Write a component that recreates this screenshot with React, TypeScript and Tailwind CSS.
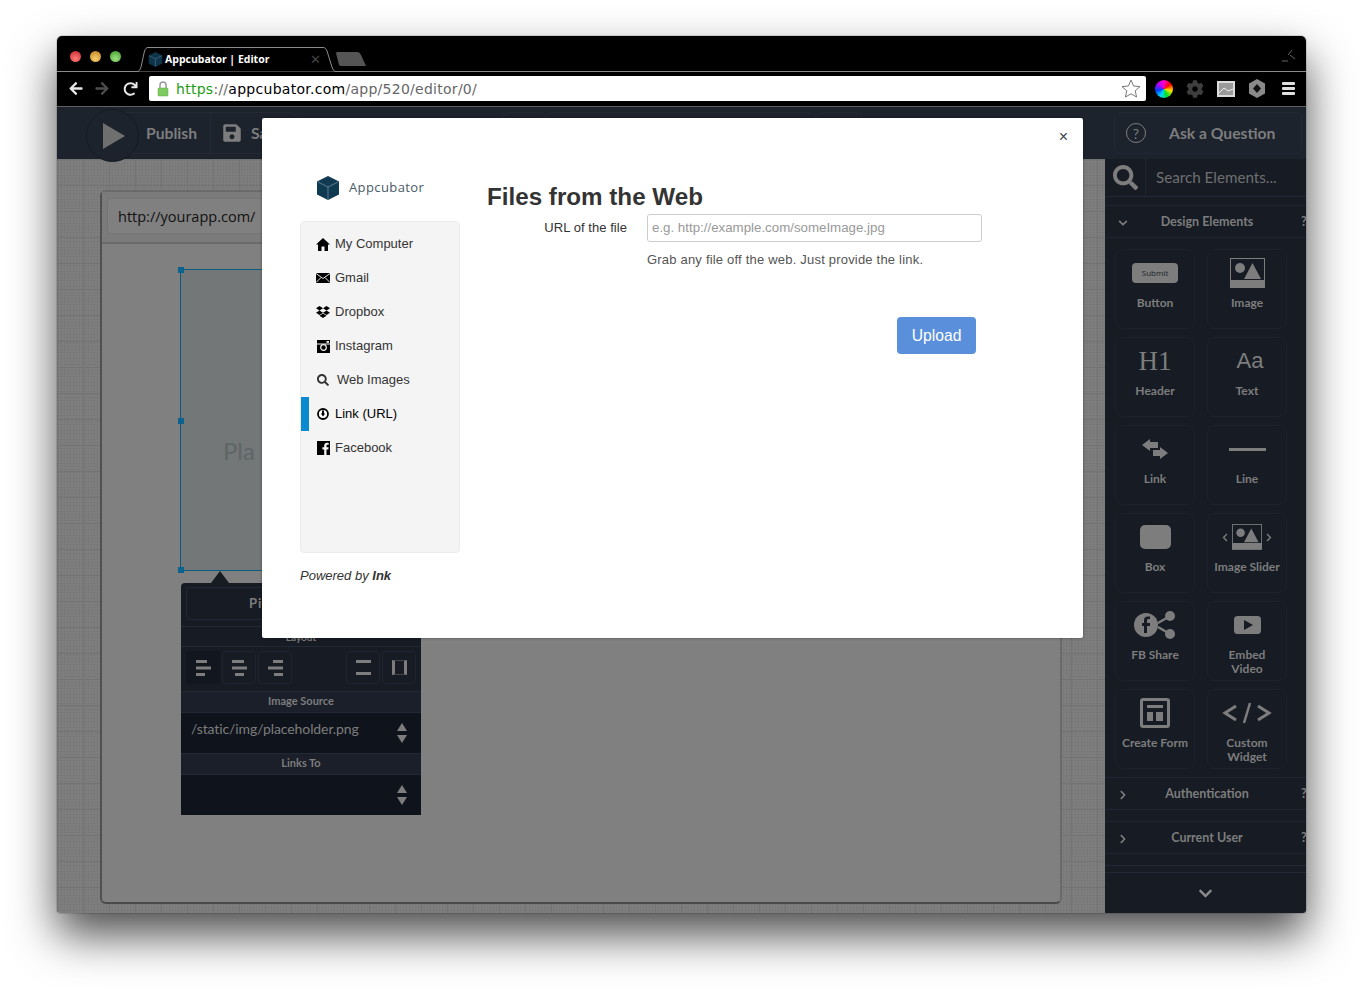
import { FC, ReactNode } from 'react';
import {
  FaArrowLeft,
  FaArrowRight,
  FaRedo,
  FaCog,
  FaDropbox,
  FaSearch,
  FaSave,
  FaChevronDown,
  FaChevronRight,
} from 'react-icons/fa';

const GREY = '#7d7d7d';

const Cube: FC<{ size: number }> = ({ size }) => (
  <svg width={size} height={size} viewBox="0 0 24 24">
    <path d="M12 0 23 5.5V18.5L12 24 1 18.5V5.5Z" fill="#0f3a52" />
    <path d="M2 6 12 11 22 6M12 11V23" stroke="#6d8ea1" strokeWidth="0.8" fill="none" />
  </svg>
);

const ImageGlyph: FC<{ w: number; h: number }> = ({ w, h }) => (
  <svg width={w} height={h} viewBox="0 0 35 30">
    <rect width="35" height="30" fill={GREY} />
    <rect x="1" y="1" width="33" height="21" fill="#161b24" />
    <circle cx="10" cy="10" r="5" fill={GREY} />
    <path d="M14 21 22.500 5 31 21Z" fill={GREY} />
  </svg>
);

const alignBars = {
  left: [[0, 11], [0, 15], [0, 9]],
  center: [[0, 12], [0, 15], [3, 9]],
  right: [[5, 10], [0, 15], [6, 9]],
};

const AlignIcon: FC<{ kind: 'left' | 'center' | 'right' }> = ({ kind }) => (
  <svg width="15" height="16" viewBox="0 0 15 16">
    {alignBars[kind].map(([x, w], i) => (
      <rect key={i} x={x} y={i * 6.5} width={w} height="3" fill={GREY} />
    ))}
  </svg>
);

const UpDown = () => (
  <svg width="10" height="20" viewBox="0 0 10 20">
    <path d="M5 0 10 8H0ZM0 12H10L5 20Z" fill={GREY} />
  </svg>
);

interface TileProps {
  label: ReactNode;
  icon: ReactNode;
}

const Tile: FC<TileProps> = ({ label, icon }) => (
  <div className="flex h-[80px] w-[80px] flex-col items-center rounded-[8px] border border-[#1c222c]">
    <div className="flex h-[46px] w-full items-center justify-center">{icon}</div>
    <div className="text-center text-[12px] leading-[14px] font-bold whitespace-nowrap text-[#7d7d7d]">{label}</div>
  </div>
);

const tiles: TileProps[] = [
  {
    label: 'Button',
    icon: (
      <div className="flex h-[20px] w-[46px] items-center justify-center rounded-[4px] bg-[#7d7d7d] text-[8px] text-[#20242c] [font-family:'Open_Sans',sans-serif]">
        Submit
      </div>
    ),
  },
  { label: 'Image', icon: <ImageGlyph w={35} h={30} /> },
  {
    label: 'Header',
    icon: <span className="text-[27px] leading-none text-[#7d7d7d] [font-family:'Liberation_Serif',serif]">H1</span>,
  },
  {
    label: 'Text',
    icon: <span className="pl-[6px] text-[22px] leading-none text-[#7d7d7d] [font-family:'Liberation_Sans',sans-serif]">Aa</span>,
  },
  {
    label: 'Link',
    icon: (
      <svg width="26" height="20" viewBox="0 0 26 20">
        <path d="M0 6 8 0V3H16V9H8V12ZM26 14 18 8V11H11V17H18V20Z" fill={GREY} />
      </svg>
    ),
  },
  { label: 'Line', icon: <div className="h-[3px] w-[37px] bg-[#7d7d7d]" /> },
  { label: 'Box', icon: <div className="h-[24px] w-[31px] rounded-[5px] bg-[#7d7d7d]" /> },
  {
    label: 'Image Slider',
    icon: (
      <div className="flex items-center gap-[4px] text-[#7d7d7d]">
        <FaChevronRight className="h-[9px] w-[6px] rotate-180" />
        <ImageGlyph w={30} h={26} />
        <FaChevronRight className="h-[9px] w-[6px]" />
      </div>
    ),
  },
  {
    label: 'FB Share',
    icon: (
      <svg width="42" height="28" viewBox="0 0 42 28">
        <path d="M24 12 36 5M24 16 36 23" stroke={GREY} strokeWidth="2.500" />
        <circle cx="12" cy="14" r="12" fill={GREY} />
        <circle cx="36" cy="5" r="5" fill={GREY} />
        <circle cx="36" cy="23" r="5" fill={GREY} />
        <path d="M13 22V15H16V12H13V9.500C13 8.500 13.600 8 15 8H16V5.500H14C11 5.500 10 7 10 9.500V12H8V15H10V22Z" fill="#161b24" />
      </svg>
    ),
  },
  {
    label: (
      <>
        Embed
        <br />
        Video
      </>
    ),
    icon: (
      <svg width="27" height="18" viewBox="0 0 27 18">
        <rect width="27" height="18" rx="3.500" fill={GREY} />
        <path d="M10 4 19 9 10 14Z" fill="#161b24" />
      </svg>
    ),
  },
  {
    label: 'Create Form',
    icon: (
      <svg width="30" height="30" viewBox="0 0 30 30">
        <rect x="1.500" y="1.500" width="27" height="27" rx="1.500" fill="none" stroke={GREY} strokeWidth="3" />
        <rect x="7" y="7" width="16" height="3" fill={GREY} />
        <rect x="7" y="14" width="6" height="9" fill={GREY} />
        <rect x="16" y="14" width="7" height="9" fill={GREY} />
      </svg>
    ),
  },
  {
    label: (
      <>
        Custom
        <br />
        Widget
      </>
    ),
    icon: (
      <svg width="50" height="22" viewBox="0 0 50 22">
        <path d="M14 4 3 11 14 18M36 4 47 11 36 18" stroke={GREY} strokeWidth="3" fill="none" />
        <path d="M28 1 22 21" stroke={GREY} strokeWidth="2.500" />
      </svg>
    ),
  },
];

const menu = [
  {
    label: 'My Computer',
    icon: (
      <svg width="14" height="13" viewBox="0 0 14 13">
        <path d="M7 0 14 6.500H12V13H8.500V8.500H5.500V13H2V6.500H0Z" fill="#000" />
      </svg>
    ),
  },
  {
    label: 'Gmail',
    icon: (
      <svg width="14" height="10" viewBox="0 0 14 10">
        <rect width="14" height="10" fill="#000" />
        <path d="M0 .5 7 5.500 14 .5M0 9.500 5 4.500M14 9.500 9 4.500" stroke="#fff" strokeWidth="0.9" fill="none" />
      </svg>
    ),
  },
  { label: 'Dropbox', icon: <FaDropbox className="h-[14px] w-[14px]" /> },
  {
    label: 'Instagram',
    icon: (
      <svg width="13" height="13" viewBox="0 0 13 13">
        <rect width="13" height="13" fill="#000" />
        <rect y="3.500" width="13" height="1" fill="#f4f4f4" />
        <circle cx="6.500" cy="7.500" r="2.800" fill="#000" stroke="#f4f4f4" strokeWidth="1.200" />
        <rect x="9.500" y="1" width="2.500" height="1.800" fill="#f4f4f4" />
      </svg>
    ),
  },
  { label: 'Web Images', icon: <FaSearch className="h-[12px] w-[12px] text-[#333]" />, extra: true },
  {
    label: 'Link (URL)',
    active: true,
    icon: (
      <svg width="12" height="12" viewBox="0 0 12 12">
        <circle cx="6" cy="6" r="5" fill="#fff" stroke="#000" strokeWidth="1.800" />
        <path d="M5 2.500H7V6H5ZM3.800 5.500H8.200L6 8.500Z" fill="#000" />
      </svg>
    ),
  },
  {
    label: 'Facebook',
    icon: (
      <svg width="13" height="14" viewBox="0 0 13 14">
        <path d="M0 0H13V14H9.500V8.500H11.300L11.600 6.300H9.500V5C9.500 4.200 9.800 3.800 10.700 3.800H11.700V1.900C11.300 1.800 10.600 1.800 9.900 1.800 8.300 1.800 7.200 2.800 7.200 4.700V6.300H5.400V8.500H7.200V14H0Z" fill="#000" />
      </svg>
    ),
  },
];

const SectionHeader: FC<{ title: string; open?: boolean; className: string }> = ({ title, open, className }) => (
  <div className={`relative flex shrink-0 items-center justify-center border-y border-[#1f2530] pt-[2px] pl-[3px] text-[12.500px] font-bold text-[#7d7d7d] ${className}`}>
    <span className="absolute left-[13px] text-[#7d7d7d]">
      {open ? <FaChevronDown className="h-[10px] w-[10px]" /> : <FaChevronRight className="h-[10px] w-[10px]" />}
    </span>
    {title}
    <span className="absolute left-[196px]">?</span>
  </div>
);

const PopLabel: FC<{ text: string }> = ({ text }) => (
  <div className="flex h-[22px] items-center justify-center border-y border-[#232934] bg-[#1a1f29] pb-[2px] text-[11px] font-bold text-[#7d7d7d]">{text}</div>
);

export default function App() {
  return (
    <div className="h-[992px] w-[1363px] overflow-hidden bg-white pt-[36px] pl-[57px] [font-family:'Lato',sans-serif]">
      <div className="flex h-[877px] w-[1249px] flex-col overflow-hidden rounded-t-[5px] rounded-b-[3px] shadow-[0_22px_45px_rgba(0,0,0,0.7),0_0_0_1px_rgba(0,0,0,0.12)]">
        {/* Title bar */}
        <div className="relative flex h-[36px] shrink-0 border-b border-[#8c8c8c] bg-black">
          <div className="flex items-center gap-[9px] pt-[5px] pl-[13px]">
            <div className="h-[11px] w-[11px] rounded-full bg-[radial-gradient(circle_at_50%_70%,#ff7a78,#c7242a)]" />
            <div className="h-[11px] w-[11px] rounded-full bg-[radial-gradient(circle_at_50%_70%,#f8cf6c,#b87b19)]" />
            <div className="h-[11px] w-[11px] rounded-full bg-[radial-gradient(circle_at_50%_70%,#9be07c,#3d9a2c)]" />
          </div>
          <div className="relative mt-[11px] ml-[13px] flex h-[25px] w-[203px] items-center pr-[16px] pl-[14px]">
            <svg className="absolute inset-0" width="203" height="25" viewBox="0 0 203 25">
              <path d="M0 24.500H3C5 24.500 6 23 7 20L10.500 4C11.500 1.500 12.500 .5 14 .5H189C191 .5 192 1.500 193 4L198 20C199 23 200 24.500 202 24.500H203" fill="#000" stroke="#8c8c8c" />
            </svg>
            <span className="relative opacity-90"><Cube size={15} /></span>
            <span className="relative ml-[2px] flex-1 text-[10.500px] font-bold text-white [font-family:'Open_Sans',sans-serif]">Appcubator | Editor</span>
            <span className="relative text-[13px] leading-none text-[#444]">✕</span>
          </div>
          <svg className="mt-[16px] -ml-[1px]" width="30" height="14" viewBox="0 0 30 14">
            <path d="M0 1 1 0H21C23 0 24 1 25 3L30 14H5C3.500 14 3 13 2.500 11Z" fill="#555" />
          </svg>
          <svg className="absolute top-[11px] right-[10px]" width="14" height="15" viewBox="0 0 14 15">
            <path d="M0 14H6M8 8 13 12M6 8 10 3" stroke="#666" strokeWidth="1" fill="none" />
          </svg>
        </div>

        {/* Toolbar */}
        <div className="flex h-[35px] shrink-0 items-center border-b border-[#5f5f5f] bg-black pb-[1px]">
          <div className="flex w-[92px] items-center pl-[11px]">
            <FaArrowLeft className="h-[15px] w-[16px] text-[#e8e8e8]" />
            <FaArrowRight className="ml-[10px] h-[15px] w-[16px] text-[#4e4e4e]" />
            <FaRedo className="ml-[13px] h-[14px] w-[15px] text-[#e8e8e8]" />
          </div>
          <div className="flex h-[25px] w-[997px] items-center rounded-[2px] bg-white pr-[5px] pl-[8px] text-[14px] tracking-[0.27px] text-[#666] [font-family:'DejaVu_Sans',sans-serif]">
            <svg width="12" height="16" viewBox="0 0 12 16">
              <path d="M3 7V4C3 2.300 4.300 1 6 1S9 2.300 9 4V7" fill="none" stroke="#9a9a9a" strokeWidth="1.500" />
              <rect x="1" y="7" width="10" height="8" rx="1" fill="#7ecb62" stroke="#5aa843" strokeWidth="0.5" />
            </svg>
            <span className="ml-[7px] pt-[2px] text-[#1e9b13]">https</span>
            <span className="pt-[2px]">://</span>
            <span className="pt-[2px] text-black">appcubator.com</span>
            <span className="pt-[2px]">/app/520/editor/0/</span>
            <svg className="ml-auto" width="20" height="19" viewBox="0 0 20 19">
              <path d="M10 1 12.600 7 19 7.600 14.200 11.800 15.600 18 10 14.800 4.400 18 5.800 11.800 1 7.600 7.400 7Z" fill="#fff" stroke="#777" strokeWidth="1" />
            </svg>
          </div>
          <div className="ml-[9px] flex items-center gap-[13px]">
            <div className="h-[18px] w-[18px] rounded-full bg-[conic-gradient(#ff00c8,#ff0000,#ffe000,#00e020,#00d8ff,#0040ff,#b000ff,#ff00c8)]" />
            <FaCog className="h-[18px] w-[18px] text-[#3e3e3e]" />
            <svg width="18" height="16" viewBox="0 0 18 16">
              <rect width="18" height="16" fill="#dcdcdc" />
              <rect x="2" y="2" width="14" height="12" fill="#9a9a9a" />
              <path d="M2 12 7 7 11 10 16 8" stroke="#eee" fill="none" />
            </svg>
            <svg width="18" height="19" viewBox="0 0 18 19">
              <path d="M9 0 17 4.500V14.500L9 19 1 14.500V4.500Z" fill="#8a8a8a" />
              <path d="M9 5 13 9.500 9 14 5 9.500Z" fill="#111" />
            </svg>
            <div className="ml-[3px] flex w-[13px] flex-col gap-[2px]">
              <div className="h-[3px] rounded-[1px] bg-[#e0e0e0]" />
              <div className="h-[3px] rounded-[1px] bg-[#e0e0e0]" />
              <div className="h-[3px] rounded-[1px] bg-[#e0e0e0]" />
            </div>
          </div>
        </div>

        {/* App */}
        <div className="relative flex min-h-0 flex-1 flex-col">
          {/* App header */}
          <div className="flex h-[52px] shrink-0 items-start bg-[#1c232d] pt-[5px] pl-[55px]">
            <div className="relative flex h-[42px] w-[185px] items-center rounded-[6px] border border-[#232a35] text-[15.700px] font-bold text-[#7d7d7d]">
              <div className="absolute top-[-4px] left-[-27px] flex h-[53px] w-[53px] items-center justify-center rounded-full border border-[#151b23] bg-[#1c232d]">
                <svg width="24" height="26" viewBox="0 0 24 26" className="ml-[3px]">
                  <path d="M1 0 23 13 1 26Z" fill="#6f6f6f" />
                </svg>
              </div>
              <span className="ml-[33px] pt-[2px]">Publish</span>
              <div className="ml-[13px] h-full border-l border-[#232a35]" />
              <FaSave className="ml-[11px] h-[20px] w-[20px]" />
              <span className="ml-[9px] pt-[2px]">Save</span>
            </div>
            <div className="ml-[206px] h-[42px] w-[43px] rounded-[6px] border border-[#232a35]" />
            <div className="h-[42px] w-[270px] rounded-[6px] border border-[#232a35]" />
            <div className="h-[42px] w-[46px] rounded-[6px] border border-[#232a35]" />
            <div className="mr-[4px] ml-auto flex h-[42px] w-[188px] items-center rounded-[6px] border border-[#232a35] text-[15.700px] font-bold text-[#7d7d7d]">
              <span className="ml-[11px] flex h-[20px] w-[20px] items-center justify-center rounded-full border border-[#7d7d7d] text-[14px] font-normal">?</span>
              <span className="ml-[23px] pt-[2px]">Ask a Question</span>
            </div>
          </div>

          <div className="flex min-h-0 flex-1">
            {/* Canvas */}
            <div className="w-[1048px] shrink-0 bg-[#7d7d7d] bg-[image:radial-gradient(#727272_0.6px,transparent_0.8px),linear-gradient(#737373_1px,transparent_1px),linear-gradient(90deg,#737373_1px,transparent_1px)] bg-[size:3px_3px,26px_26px,26px_26px] px-[43px] pt-[31px] pb-[9px]">
              <div className="h-full rounded-[6px] border-2 border-[#6a6a6a] border-b-[#4a4a4a] border-l-[#505050] bg-[#808080]">
                <div className="h-[52px] border-b-2 border-[#6a6a6a] bg-[#7b7b7b] pt-[6px] pl-[5px]">
                  <div className="flex h-[36px] w-[320px] items-center rounded-[4px] border border-[#747474] bg-[#808080] pt-[2px] pl-[10px] text-[14.500px] text-[#111] [font-family:'Open_Sans',sans-serif]">
                    http://yourapp.com/
                  </div>
                </div>
                {/* Selected image */}
                <div className="relative mt-[25px] ml-[78px] h-[302px] w-[480px] border border-[#0b5a82] bg-[#737778]">
                  <div className="absolute top-[166px] left-[42px] text-[24px] leading-[30px] whitespace-nowrap text-[#5f6566]">Pla</div>
                  <div className="absolute top-[-3px] left-[-3px] h-[6px] w-[6px] bg-[#0b628c]" />
                  <div className="absolute top-[148px] left-[-3px] h-[6px] w-[6px] bg-[#0b628c]" />
                  <div className="absolute bottom-[-3px] left-[-3px] h-[6px] w-[6px] bg-[#0b628c]" />
                  {/* Settings popover */}
                  <div className="absolute top-[313px] left-0 w-[240px] rounded-t-[4px] bg-[#161b24]">
                    <div className="absolute top-[-12px] left-[30px] h-0 w-0 border-x-[9px] border-b-[12px] border-x-transparent border-b-[#161b24]" />
                    <div className="flex h-[44px] items-start border-b border-[#232934] px-[5px] pt-[4px]">
                      <div className="flex h-[33px] w-full items-center justify-center rounded-[4px] border border-[#232934] text-[13px] font-bold tracking-[0.8px] text-[#7d7d7d]">Pick New Image</div>
                    </div>
                    <div className="flex h-[19px] items-center justify-center pt-[1px] text-[10px] font-bold text-[#7d7d7d]">Layout</div>
                    <div className="flex h-[45px] items-start border-t border-[#232934] px-[5px] pt-[4px]">
                      <div className="flex gap-[2px]">
                        <div className="flex h-[33px] w-[34px] items-center justify-center rounded-[4px] bg-[#12161e]"><AlignIcon kind="left" /></div>
                        <div className="flex h-[33px] w-[34px] items-center justify-center rounded-[4px] border border-[#1f2530]"><AlignIcon kind="center" /></div>
                        <div className="flex h-[33px] w-[34px] items-center justify-center rounded-[4px] border border-[#1f2530]"><AlignIcon kind="right" /></div>
                      </div>
                      <div className="ml-auto flex gap-[2px]">
                        <div className="flex h-[33px] w-[34px] flex-col items-center justify-center gap-[9px] rounded-[4px] border border-[#1f2530]">
                          <div className="h-[3px] w-[15px] bg-[#7d7d7d]" />
                          <div className="h-[3px] w-[15px] bg-[#7d7d7d]" />
                        </div>
                        <div className="flex h-[33px] w-[34px] items-center justify-center rounded-[4px] border border-[#1f2530]">
                          <div className="h-[15px] w-[15px] border-x-[3px] border-y border-x-[#7d7d7d] border-y-[#444]" />
                        </div>
                      </div>
                    </div>
                    <PopLabel text="Image Source" />
                    <div className="flex h-[40px] items-center justify-between bg-[#0f131b] pr-[14px] pl-[10px] text-[14px] tracking-[-0.1px] text-[#7d7d7d]">
                      <span className="pb-[10px]">/static/img/placeholder.png</span>
                      <UpDown />
                    </div>
                    <PopLabel text="Links To" />
                    <div className="flex h-[40px] items-center justify-end bg-[#0f131b] pr-[14px]">
                      <UpDown />
                    </div>
                  </div>
                </div>
              </div>
            </div>

            {/* Sidebar */}
            <div className="flex w-[201px] shrink-0 flex-col overflow-hidden bg-[#161b24]">
              <div className="flex h-[38px] shrink-0 items-center border-b border-[#232934]">
                <div className="flex h-full w-[41px] items-center justify-center border-r border-[#1e2430]">
                  <FaSearch className="h-[25px] w-[25px] text-[#7d7d7d]" />
                </div>
                <span className="ml-[10px] text-[15.200px] text-[#6f6f6f]">Search Elements...</span>
              </div>
              <SectionHeader title="Design Elements" open className="mt-[8px] h-[33px]" />
              <div className="mt-[11px] ml-[10px] grid grid-cols-[80px_80px] gap-x-[12px] gap-y-[8px]">
                {tiles.map((t, i) => (
                  <Tile key={i} {...t} />
                ))}
              </div>
              <SectionHeader title="Authentication" className="mt-[8px] h-[33px]" />
              <SectionHeader title="Current User" className="mt-[11px] h-[33px]" />
              <div className="mt-[11px] h-[8px] shrink-0 border-y border-[#232934]" />
              <div className="flex flex-1 items-center justify-center">
                <FaChevronDown className="h-[15px] w-[15px] text-[#8a8a8a]" />
              </div>
            </div>
          </div>

          {/* Modal */}
          <div className="absolute top-[11px] left-[205px] flex h-[520px] w-[821px] rounded-[2px] bg-white text-[13px] text-[#333] shadow-[0_0_3px_rgba(0,0,0,0.4)] [font-family:'Liberation_Sans',sans-serif]">
            <button className="absolute top-[9px] right-[15px] text-[16px] leading-[20px] text-[#3a4652]">×</button>
            <div className="ml-[38px] w-[160px] shrink-0">
              <div className="mt-[57px] flex h-[26px] items-center pl-[16px]">
                <Cube size={24} />
                <span className="ml-[9px] text-[13px] tracking-[0.4px] text-[#4a5a68] [font-family:'Open_Sans',sans-serif]">Appcubator</span>
              </div>
              <div className="mt-[20px] h-[332px] rounded-[4px] border border-[#ececec] bg-[#f4f4f4] pt-[5px]">
                {menu.map((m) => (
                  <div key={m.label} className={`flex h-[34px] items-center ${m.active ? 'border-l-[8px] border-[#0a8ad0] pl-[7px] text-black' : 'pl-[15px]'}`}>
                    <span className="flex w-[14px] justify-center text-black">{m.icon}</span>
                    <span className={m.extra ? 'ml-[7px]' : 'ml-[5px]'}>{m.label}</span>
                  </div>
                ))}
              </div>
              <div className="mt-[13px] text-[13px] italic">
                Powered by <b>Ink</b>
              </div>
            </div>
            <div className="ml-[27px] flex-1">
              <h1 className="mt-[64px] text-[24.200px] leading-[30px] font-bold text-[#333]">Files from the Web</h1>
              <div className="mt-[2px] flex items-center">
                <label className="w-[140px] text-right tracking-[0.05px]">URL of the file</label>
                <input
                  className="ml-[20px] h-[28px] w-[335px] rounded-[3px] border border-[#ccc] px-[4px] pb-[1px] text-[13.300px] outline-none placeholder:text-[#999]"
                  placeholder="e.g. http://example.com/someImage.jpg"
                />
              </div>
              <p className="mt-[10px] ml-[160px] leading-[15px] tracking-[0.2px] text-[#555]">Grab any file off the web. Just provide the link.</p>
              <div className="mt-[50px] ml-[410px]">
                <button className="h-[37px] w-[79px] rounded-[4px] bg-[#5a8fdc] text-[15.700px] text-white">Upload</button>
              </div>
            </div>
          </div>
        </div>
      </div>
    </div>
  );
}
